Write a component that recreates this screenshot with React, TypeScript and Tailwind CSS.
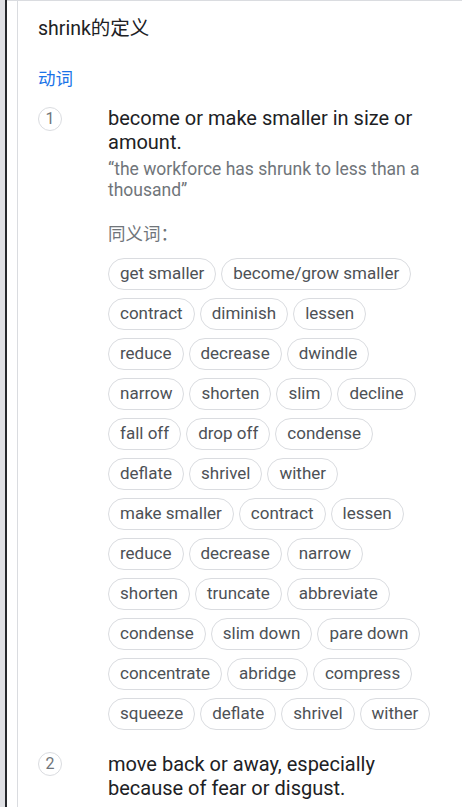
import React from "react";

const FONT = { fontFamily: 'Roboto, "Noto Sans CJK SC", Arial, sans-serif' };

const rows: string[][] = [
  ["get smaller", "become/grow smaller"],
  ["contract", "diminish", "lessen"],
  ["reduce", "decrease", "dwindle"],
  ["narrow", "shorten", "slim", "decline"],
  ["fall off", "drop off", "condense"],
  ["deflate", "shrivel", "wither"],
  ["make smaller", "contract", "lessen"],
  ["reduce", "decrease", "narrow"],
  ["shorten", "truncate", "abbreviate"],
  ["condense", "slim down", "pare down"],
  ["concentrate", "abridge", "compress"],
  ["squeeze", "deflate", "shrivel", "wither"],
];

function Num({ n }: { n: number }) {
  return (
    <div className="flex h-6 w-6 shrink-0 items-center justify-center rounded-full border border-[#dadce0] text-[16px] text-[#70757a]">
      {n}
    </div>
  );
}

function Chip({ label }: { label: string }) {
  return (
    <span className="flex h-8 items-center rounded-full border border-[#dadce0] px-[11px] text-[17px] text-[#4d5156]">
      {label}
    </span>
  );
}

export default function App() {
  return (
    <div className="flex h-[807px] w-[462px] overflow-hidden bg-white" style={FONT}>
      {/* window edge */}
      <div className="w-[5px] shrink-0 bg-[#dfe0e4]" />
      <div className="w-[2px] shrink-0 bg-[#26282c]" />

      <div className="flex flex-1 border-t border-[#dadce0]">
        <div className="w-[10px] shrink-0" />
        <div className="flex-1 border-l border-[#dadce0] pl-5 pt-[16px]">
          <h1 className="text-[19.5px] leading-6 text-[#202124]">shrink的定义</h1>
          <div className="mt-[26px] text-[17.5px] leading-[24px] text-[#1a73e8]">动词</div>

          {/* sense 1 */}
          <div className="mt-[15px] flex">
            <div className="w-[70px] shrink-0 pt-px">
              <Num n={1} />
            </div>
            <div className="flex-1 pr-4">
              <p className="text-[20px] leading-6 text-[#202124]">become or make smaller in size or amount.</p>
              <p className="mt-[5px] text-[17.5px] leading-[21px] text-[#70757a]">
                “the workforce has shrunk to less than a thousand”
              </p>
              <div className="mt-[22px] text-[17.5px] leading-[22px] text-[#70757a]">同义词：</div>
              <div className="mt-[13px] flex flex-col gap-2">
                {rows.map((row, i) => (
                  <div key={i} className="flex gap-[5px]">
                    {row.map((w, j) => (
                      <Chip key={j} label={w} />
                    ))}
                  </div>
                ))}
              </div>
            </div>
          </div>

          {/* sense 2 */}
          <div className="mt-[22px] flex">
            <div className="w-[70px] shrink-0">
              <Num n={2} />
            </div>
            <p className="flex-1 pr-4 text-[20px] leading-6 text-[#202124]">
              move back or away, especially because of fear or disgust.
            </p>
          </div>
        </div>
      </div>
    </div>
  );
}
